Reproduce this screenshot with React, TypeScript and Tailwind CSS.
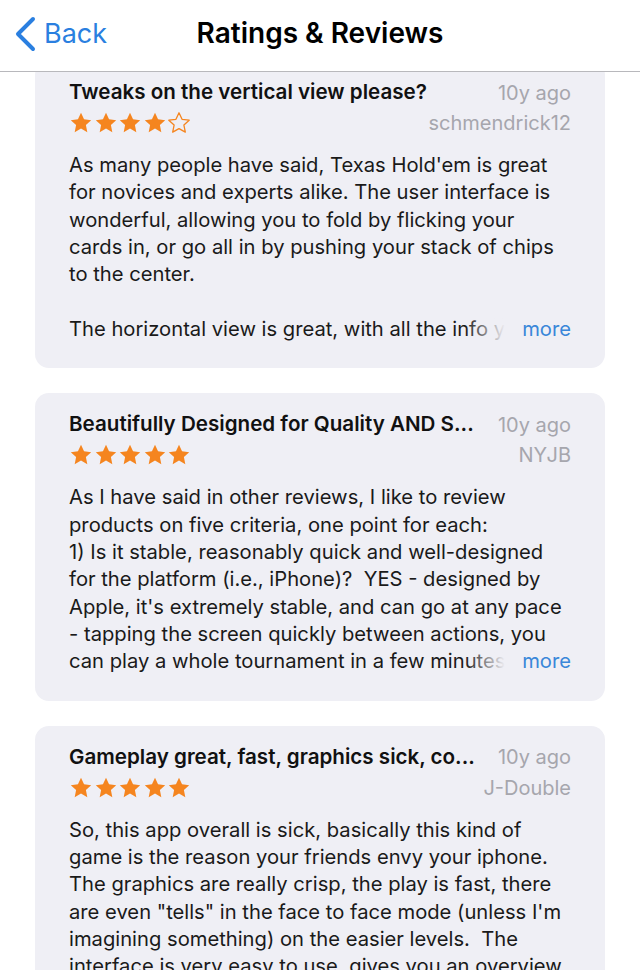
import React from 'react';

interface Review {
  id: string;
  title: string;
  age: string;
  author: string;
  stars: number;
  lines: string[];
  more: boolean;
}

const reviews: Review[] = [
  {
    id: '1',
    title: 'Tweaks on the vertical view please?',
    age: '10y ago',
    author: 'schmendrick12',
    stars: 4,
    lines: [
      'As many people have said, Texas Hold\'em is great',
      'for novices and experts alike. The user interface is',
      'wonderful, allowing you to fold by flicking your',
      'cards in, or go all in by pushing your stack of chips',
      'to the center.',
      '',
      'The horizontal view is great, with all the info y',
    ],
    more: true,
  },
  {
    id: '2',
    title: 'Beautifully Designed for Quality AND S...',
    age: '10y ago',
    author: 'NYJB',
    stars: 5,
    lines: [
      'As I have said in other reviews, I like to review',
      'products on five criteria, one point for each:',
      '1) Is it stable, reasonably quick and well-designed',
      'for the platform (i.e., iPhone)?  YES - designed by',
      'Apple, it\'s extremely stable, and can go at any pace',
      '- tapping the screen quickly between actions, you',
      'can play a whole tournament in a few minutes',
    ],
    more: true,
  },
  {
    id: '3',
    title: 'Gameplay great, fast, graphics sick, co...',
    age: '10y ago',
    author: 'J-Double',
    stars: 5,
    lines: [
      'So, this app overall is sick, basically this kind of',
      'game is the reason your friends envy your iphone.',
      'The graphics are really crisp, the play is fast, there',
      'are even "tells" in the face to face mode (unless I\'m',
      'imagining something) on the easier levels.  The',
      'interface is very easy to use, gives you an overview',
    ],
    more: false,
  },
];

function Star({ filled }: { filled: boolean }) {
  return (
    <svg width="24" height="24" viewBox="0 0 24 24" className="shrink-0">
      <path
        d="M12 1.8l3.05 6.55 7.15.85-5.3 4.9 1.42 7.08L12 17.6l-6.32 3.58 1.42-7.08-5.3-4.9 7.15-.85z"
        fill={filled ? '#f5851f' : 'none'}
        stroke="#f5851f"
        strokeWidth={filled ? 0 : 1.3}
        strokeLinejoin="round"
      />
    </svg>
  );
}

function ReviewCard({ review, first }: { review: Review; first?: boolean }) {
  return (
    <div className={`bg-[#efeff5] rounded-[14px] px-[34px] pt-[18px] pb-[26px] ${first ? '-mt-[11px]' : ''}`}>
      <div className="flex items-center justify-between h-[27px]">
        <span className="text-[20.6px] font-semibold text-[#111]">{review.title}</span>
        <span className="text-[20px] text-[#a6a6ad]">{review.age}</span>
      </div>
      <div className="flex items-center justify-between h-[24px] mt-[5px]">
        <div className="flex items-center gap-[0.5px]">
          {[0, 1, 2, 3, 4].map(i => (
            <Star key={i} filled={i < review.stars} />
          ))}
        </div>
        <span className="text-[20px] text-[#a6a6ad]">{review.author}</span>
      </div>
      <div className="mt-[16px] text-[20.2px] leading-[27.33px] text-[#1a1a1a]">
        {review.lines.map((line, i) => {
          const last = i === review.lines.length - 1;
          if (last && review.more) {
            return (
              <div key={i} className="flex justify-between whitespace-pre">
                <span className="relative overflow-hidden">
                  {line}
                  <span className="absolute right-0 top-0 bottom-0 w-[40px] bg-gradient-to-r from-transparent to-[#efeff5]" />
                </span>
                <span className="text-[#3a87d9]">more</span>
              </div>
            );
          }
          return (
            <div key={i} className="whitespace-pre h-[27.33px]">
              {line}
            </div>
          );
        })}
      </div>
    </div>
  );
}

export default function App() {
  return (
    <div className="w-[640px] h-[970px] overflow-hidden bg-white font-['Inter','Liberation_Sans',sans-serif]">
      <div className="relative z-10 h-[72px] bg-white border-b border-[#b8b8bc] flex items-center px-[14px] pb-[4px]">
        <div className="flex items-center gap-[8px] text-[#2a7fe0]">
          <svg width="22" height="36" viewBox="0 0 22 36">
            <path d="M19 3L4 18l15 15" fill="none" stroke="#2a7fe0" strokeWidth="4" strokeLinecap="round" strokeLinejoin="round" />
          </svg>
          <span className="text-[27px] leading-none">Back</span>
        </div>
        <span className="absolute left-0 right-0 top-[15px] text-center text-[28px] leading-[36px] font-semibold text-black pointer-events-none">
          Ratings &amp; Reviews
        </span>
      </div>
      <div className="px-[35px] flex flex-col gap-[25px]">
        {reviews.map((r, i) => (
          <ReviewCard key={r.id} review={r} first={i === 0} />
        ))}
      </div>
    </div>
  );
}
